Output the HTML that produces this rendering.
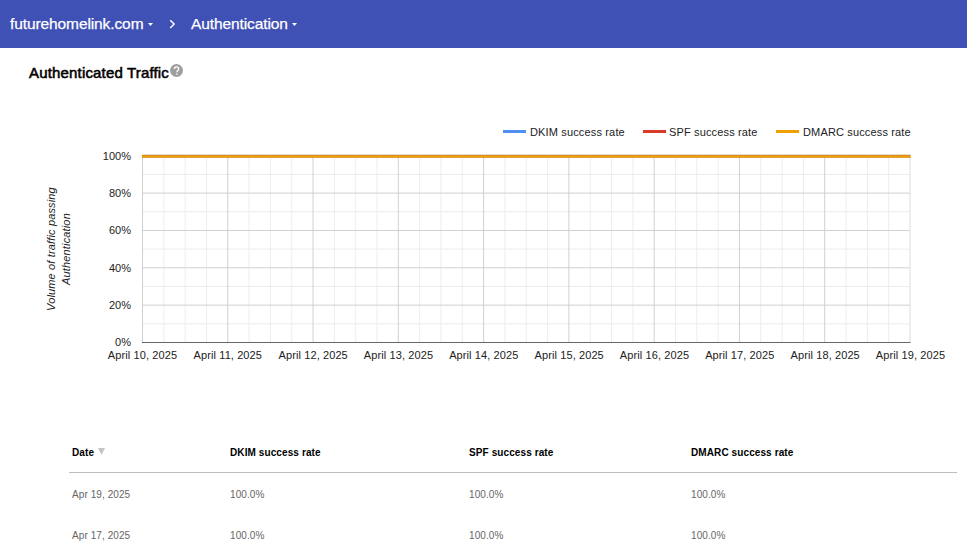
<!DOCTYPE html>
<html><head><meta charset="utf-8">
<style>
*{margin:0;padding:0;box-sizing:border-box}
html,body{width:967px;height:554px;overflow:hidden;background:#fff;font-family:"Liberation Sans",sans-serif}
.bar{position:absolute;left:0;top:0;width:967px;height:48px;background:#3f51b5;color:#fff}
.bar .t{position:absolute;top:14px;font-size:15.5px;line-height:20px;white-space:nowrap;letter-spacing:-0.1px;-webkit-text-stroke:0.25px #fff}
.abs{position:absolute;white-space:nowrap}
.title{left:29px;top:64px;font-size:15px;font-weight:normal;color:#000;line-height:18px;letter-spacing:0.17px;-webkit-text-stroke:0.55px #000}
.lg{font-size:11px;color:#222;line-height:13px;top:126px;letter-spacing:0.15px}
.yl{font-size:11px;color:#222;line-height:12px;text-align:right;width:40px}
.xl{font-size:11px;color:#222;line-height:12px;letter-spacing:0.1px;text-align:center;width:100px}
.th{font-size:10px;font-weight:bold;color:#000;line-height:12px;top:447px;letter-spacing:0.1px}
.td{font-size:10px;color:#666;line-height:12px;letter-spacing:0.08px}
</style></head><body>
<div class="bar">
  <div class="t" style="left:10px">futurehomelink.com</div>
  <svg class="abs" style="left:148px;top:23px" width="5" height="3"><path d="M0 0h5L2.5 3z" fill="#fff"/></svg>
  <svg class="abs" style="left:168px;top:18px" width="9" height="12"><path d="M2.2 2.2L6.1 6.1 2.2 10" stroke="#fff" stroke-width="1.45" fill="none"/></svg>
  <div class="t" style="left:191px">Authentication</div>
  <svg class="abs" style="left:292px;top:23px" width="5" height="3"><path d="M0 0h5L2.5 3z" fill="#fff"/></svg>
</div>
<div class="abs title">Authenticated Traffic</div>
<svg class="abs" style="left:170px;top:64px" width="13" height="13"><circle cx="6.5" cy="6.5" r="6.5" fill="#9e9e9e"/><path d="M4.4 5.1C4.4 3.8 5.3 2.9 6.6 2.9 7.8 2.9 8.7 3.8 8.7 4.9 8.7 6.3 6.9 6.4 6.9 8.3" stroke="#fff" stroke-width="1.3" fill="none"/><circle cx="6.9" cy="10.1" r="0.8" fill="#fff"/></svg>

<svg class="abs" style="left:0;top:0" width="967" height="400" shape-rendering="geometricPrecision"><rect x="142" y="323.32" width="768.00" height="1" fill="#ededed"/><rect x="142" y="285.98" width="768.00" height="1" fill="#ededed"/><rect x="142" y="248.62" width="768.00" height="1" fill="#ededed"/><rect x="142" y="211.28" width="768.00" height="1" fill="#ededed"/><rect x="142" y="173.92" width="768.00" height="1" fill="#ededed"/><rect x="163.32" y="155.75" width="1" height="186.75" fill="#ededed"/><rect x="184.64" y="155.75" width="1" height="186.75" fill="#ededed"/><rect x="205.96" y="155.75" width="1" height="186.75" fill="#ededed"/><rect x="248.60" y="155.75" width="1" height="186.75" fill="#ededed"/><rect x="269.92" y="155.75" width="1" height="186.75" fill="#ededed"/><rect x="291.24" y="155.75" width="1" height="186.75" fill="#ededed"/><rect x="333.88" y="155.75" width="1" height="186.75" fill="#ededed"/><rect x="355.19" y="155.75" width="1" height="186.75" fill="#ededed"/><rect x="376.51" y="155.75" width="1" height="186.75" fill="#ededed"/><rect x="419.15" y="155.75" width="1" height="186.75" fill="#ededed"/><rect x="440.47" y="155.75" width="1" height="186.75" fill="#ededed"/><rect x="461.79" y="155.75" width="1" height="186.75" fill="#ededed"/><rect x="504.43" y="155.75" width="1" height="186.75" fill="#ededed"/><rect x="525.75" y="155.75" width="1" height="186.75" fill="#ededed"/><rect x="547.07" y="155.75" width="1" height="186.75" fill="#ededed"/><rect x="589.71" y="155.75" width="1" height="186.75" fill="#ededed"/><rect x="611.03" y="155.75" width="1" height="186.75" fill="#ededed"/><rect x="632.35" y="155.75" width="1" height="186.75" fill="#ededed"/><rect x="674.99" y="155.75" width="1" height="186.75" fill="#ededed"/><rect x="696.31" y="155.75" width="1" height="186.75" fill="#ededed"/><rect x="717.62" y="155.75" width="1" height="186.75" fill="#ededed"/><rect x="760.26" y="155.75" width="1" height="186.75" fill="#ededed"/><rect x="781.58" y="155.75" width="1" height="186.75" fill="#ededed"/><rect x="802.90" y="155.75" width="1" height="186.75" fill="#ededed"/><rect x="845.54" y="155.75" width="1" height="186.75" fill="#ededed"/><rect x="866.86" y="155.75" width="1" height="186.75" fill="#ededed"/><rect x="888.18" y="155.75" width="1" height="186.75" fill="#ededed"/><rect x="142" y="304.65" width="768.00" height="1" fill="#d0d0d0"/><rect x="142" y="267.30" width="768.00" height="1" fill="#d0d0d0"/><rect x="142" y="229.95" width="768.00" height="1" fill="#d0d0d0"/><rect x="142" y="192.60" width="768.00" height="1" fill="#d0d0d0"/><rect x="142.00" y="155.75" width="1" height="186.75" fill="#d0d0d0"/><rect x="227.28" y="155.75" width="1" height="186.75" fill="#d0d0d0"/><rect x="312.56" y="155.75" width="1" height="186.75" fill="#d0d0d0"/><rect x="397.83" y="155.75" width="1" height="186.75" fill="#d0d0d0"/><rect x="483.11" y="155.75" width="1" height="186.75" fill="#d0d0d0"/><rect x="568.39" y="155.75" width="1" height="186.75" fill="#d0d0d0"/><rect x="653.67" y="155.75" width="1" height="186.75" fill="#d0d0d0"/><rect x="738.94" y="155.75" width="1" height="186.75" fill="#d0d0d0"/><rect x="824.22" y="155.75" width="1" height="186.75" fill="#d0d0d0"/><rect x="909.50" y="155.75" width="1" height="186.75" fill="#dedede"/><rect x="142" y="342" width="768.50" height="1" fill="#666"/><line x1="142" x2="910.5" y1="156.25" y2="156.25" stroke="#c27538" stroke-width="2.9"/><line x1="142" x2="910.5" y1="156.5" y2="156.5" stroke="#f0a400" stroke-width="2.1"/><line x1="503" x2="526" y1="131.5" y2="131.5" stroke="#5090f2" stroke-width="3"/><line x1="643" x2="666" y1="131.5" y2="131.5" stroke="#da3a2a" stroke-width="3"/><line x1="776" x2="799" y1="131.5" y2="131.5" stroke="#f0a000" stroke-width="3"/></svg>
<div class="abs yl" style="left:91px;top:150.0px">100%</div>
<div class="abs yl" style="left:91px;top:187.2px">80%</div>
<div class="abs yl" style="left:91px;top:224.4px">60%</div>
<div class="abs yl" style="left:91px;top:261.6px">40%</div>
<div class="abs yl" style="left:91px;top:298.8px">20%</div>
<div class="abs yl" style="left:91px;top:336.0px">0%</div>
<div class="abs xl" style="left:92.5px;top:349px">April 10, 2025</div>
<div class="abs xl" style="left:177.8px;top:349px">April 11, 2025</div>
<div class="abs xl" style="left:263.2px;top:349px">April 12, 2025</div>
<div class="abs xl" style="left:348.5px;top:349px">April 13, 2025</div>
<div class="abs xl" style="left:433.8px;top:349px">April 14, 2025</div>
<div class="abs xl" style="left:519.2px;top:349px">April 15, 2025</div>
<div class="abs xl" style="left:604.5px;top:349px">April 16, 2025</div>
<div class="abs xl" style="left:689.8px;top:349px">April 17, 2025</div>
<div class="abs xl" style="left:775.2px;top:349px">April 18, 2025</div>
<div class="abs xl" style="left:860.5px;top:349px">April 19, 2025</div>
<div class="abs" style="left:59px;top:249px;transform:translate(-50%,-50%) rotate(-90deg);font-size:11px;font-style:italic;color:#222;line-height:15px;letter-spacing:0.15px;text-align:center">Volume of traffic passing<br>Authentication</div>

<div class="abs lg" style="left:530px">DKIM success rate</div>
<div class="abs lg" style="left:669px">SPF success rate</div>
<div class="abs lg" style="left:803px">DMARC success rate</div>

<div class="abs th" style="left:72px">Date</div>
<svg class="abs" style="left:98px;top:448px" width="7" height="7"><path d="M0 0h7L3.5 7z" fill="#c4c4c4"/></svg>
<div class="abs th" style="left:230px">DKIM success rate</div>
<div class="abs th" style="left:469px">SPF success rate</div>
<div class="abs th" style="left:691px">DMARC success rate</div>
<div class="abs" style="left:69px;top:472px;width:888px;height:1px;background:#bdbdbd"></div>
<div class="abs td" style="left:72px;top:489px">Apr 19, 2025</div>
<div class="abs td" style="left:230px;top:489px">100.0%</div>
<div class="abs td" style="left:469px;top:489px">100.0%</div>
<div class="abs td" style="left:691px;top:489px">100.0%</div>
<div class="abs td" style="left:72px;top:530px">Apr 17, 2025</div>
<div class="abs td" style="left:230px;top:530px">100.0%</div>
<div class="abs td" style="left:469px;top:530px">100.0%</div>
<div class="abs td" style="left:691px;top:530px">100.0%</div>
</body></html>
